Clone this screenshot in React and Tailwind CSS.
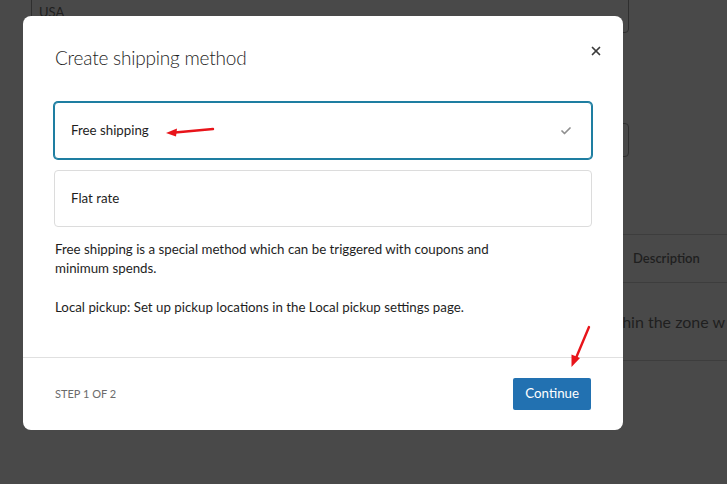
import React from 'react';
import { X, Check } from 'lucide-react';

function Option({ label, selected }) {
  return (
    <div
      className={`relative flex h-[57px] items-center justify-between rounded-[4px] border bg-white pl-4 pr-[19px] ${
        selected ? 'border-[#1e7ea1] ring-1 ring-[#1e7ea1]' : 'border-[#dcdcdc]'
      }`}
    >
      <span className="text-[13.3px] text-[#1e1e1e]">{label}</span>
      {selected && <Check size={12} strokeWidth={3.5} className="text-[#8f8f8f]" />}
      {selected && (
        <svg className="absolute left-[110px] top-[22px]" width="50" height="14" viewBox="0 0 50 14">
          <path d="M48 4 L10 7.5" stroke="#e8141a" strokeWidth="2.4" strokeLinecap="round" fill="none" />
          <path d="M1 8 L12 3.5 L11 11.5 Z" fill="#e8141a" />
        </svg>
      )}
    </div>
  );
}

function Page() {
  return (
    <div className="flex h-[484px] flex-col overflow-hidden bg-[#494949] text-[#1f1f1f]">
      <div className="ml-[31px] -mt-[10px] flex h-[43px] w-[598px] items-end rounded-[4px] border border-[#2f2f2f] px-[7px] pb-[10px] text-[13px]">
        USA
      </div>
      <div className="ml-[330px] mt-[90px] h-[34px] w-[299px] rounded-[4px] border border-[#2f2f2f]" />
      <div className="ml-[300px] mt-[77px] border-y border-[#3d3d3d]">
        <div className="flex h-[48px] items-center border-b border-[#3d3d3d] pl-[333px] text-[13px] font-semibold">
          Description
        </div>
        <div className="flex h-[77px] items-center overflow-hidden pl-[300px] text-[16px] whitespace-nowrap">
          within the zone w
        </div>
      </div>
    </div>
  );
}

export default function App() {
  return (
    <div className="relative h-[484px] w-[727px] overflow-hidden font-['Lato','Noto_Sans',sans-serif]">
      <Page />
      <div className="absolute left-[23px] top-[16px] flex h-[414px] w-[600px] flex-col rounded-[8px] bg-white">
        <button className="absolute right-[20px] top-[28px] flex h-[14px] w-[14px] items-center justify-center text-[#3c3c3c]">
          <X size={14} strokeWidth={3} />
        </button>
        <div className="flex flex-1 flex-col px-[31px] pt-7">
          <h2 className="pl-px text-[19px] font-light leading-[28px] tracking-[-0.2px] text-[#1e1e1e]">
            Create shipping method
          </h2>
          <div className="mt-[30px] flex flex-col gap-[11px]">
            <Option label="Free shipping" selected />
            <Option label="Flat rate" />
          </div>
          <p className="mt-[13px] max-w-[470px] pl-px text-[13.3px] leading-[19px] text-[#1e1e1e]">
            Free shipping is a special method which can be triggered with coupons and minimum spends.
          </p>
          <p className="mt-[20px] pl-px text-[13.3px] leading-[19px] text-[#1e1e1e]">
            Local pickup: Set up pickup locations in the Local pickup settings page.
          </p>
          <div className="relative flex-1">
            <svg className="absolute right-0 bottom-[-12px]" width="24" height="44" viewBox="0 0 24 44">
              <path d="M21 2 L8 33" stroke="#e8141a" strokeWidth="2.4" strokeLinecap="round" fill="none" />
              <path d="M3.5 42 L3.5 29.5 L12 33 Z" fill="#e8141a" />
            </svg>
          </div>
        </div>
        <div className="flex h-[73px] items-center justify-between border-t border-[#e0e0e0] px-[32px]">
          <span className="text-[11px] uppercase text-[#6b6b6b]">Step 1 of 2</span>
          <button className="h-[32px] rounded-[2px] bg-[#2271b1] px-[12px] text-[13.3px] text-white">Continue</button>
        </div>
      </div>
    </div>
  );
}
